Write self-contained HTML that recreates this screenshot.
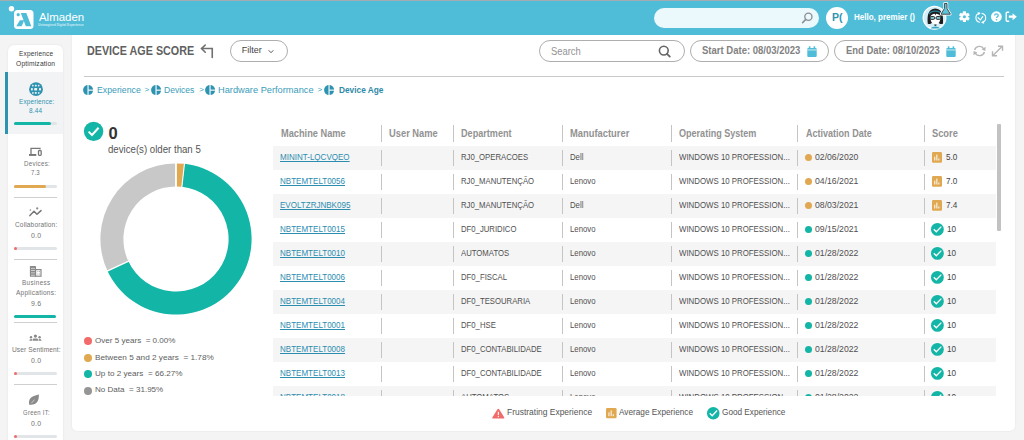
<!DOCTYPE html>
<html><head><meta charset="utf-8">
<style>
*{box-sizing:border-box;margin:0;padding:0}
html,body{width:1024px;height:440px;overflow:hidden;background:#f4f4f4;font-family:"Liberation Sans",sans-serif;position:relative}
.a{position:absolute}
.t{white-space:pre;line-height:1}
svg{overflow:visible}
</style></head><body>
<div class="a" style="left:0px;top:0px;width:1024px;height:35px;background:#50bdd8;"></div>
<div class="a" style="left:0px;top:0px;width:1024px;height:1px;background:#a3adb0;"></div>
<svg class="a" style="left:0px;top:0px" width="100" height="35" viewBox="0 0 100 35">
<circle cx="11.5" cy="8.7" r="2.7" fill="#fff"/>
<rect x="14" y="10" width="19.5" height="19" rx="3.5" fill="#fff"/>
<circle cx="18.2" cy="14.7" r="1.6" fill="#50bdd8"/>
<polygon points="20.8,12.9 26.3,12.9 31.3,26.2 25.8,26.2" fill="#50bdd8"/>
<polygon points="19.9,20.2 24.3,20.2 21.6,26.2 16.3,26.2" fill="#50bdd8"/>
</svg>
<div class="a t" style="left:38.90px;top:11.67px;font-size:11.5px;color:#fff;font-weight:400;letter-spacing:0px;transform:scaleX(0.9936);transform-origin:0 0;">Almaden</div>
<div class="a t" style="left:38.30px;top:23.72px;font-size:3.4px;color:rgba(255,255,255,.7);font-weight:700;letter-spacing:0px;transform:scaleX(0.9186);transform-origin:0 0;">Unimagined Digital Experience</div>
<div class="a" style="left:654px;top:8px;width:165px;height:19.5px;background:#ebf8fc;border-radius:10px"></div>
<svg class="a" style="left:798px;top:10px" width="16" height="16" viewBox="0 0 16 16"><circle cx="10.4" cy="6.8" r="3.6" fill="none" stroke="#8a8f92" stroke-width="1.3"/><line x1="7.8" y1="9.4" x2="4.6" y2="12.6" stroke="#8a8f92" stroke-width="1.5" stroke-linecap="round"/></svg>
<div class="a" style="left:826px;top:7px;width:22px;height:22px;border-radius:50%;background:#fff"></div>
<div class="a t" style="left:832.20px;top:12.64px;font-size:10px;color:#2e93b1;font-weight:700;letter-spacing:0px;transform:scaleX(1.0500);transform-origin:0 0;">P(</div>
<div class="a t" style="left:853.70px;top:12.60px;font-size:8.5px;color:#fff;font-weight:700;letter-spacing:0px;transform:scaleX(0.9425);transform-origin:0 0;">Hello, premier ()</div>
<svg class="a" style="left:920px;top:2px" width="32" height="30" viewBox="0 0 32 30">
<circle cx="14.5" cy="15.75" r="11.3" fill="#d3eef6" stroke="#fff" stroke-width="1.3"/>
<path d="M7.8,21.8 C7,14 8,6.8 15.3,6.5 C22.6,6.8 23.6,14 22.9,21.8 C21,22.3 19.5,22 19,21 L11.5,21 C11,22 9.5,22.3 7.8,21.8Z" fill="#1d1d1d"/>
<path d="M9.2,12.2 C10.5,8 20.1,8 21.4,12.2" fill="none" stroke="#2b7f97" stroke-width="1.2"/>
<path d="M10.4,15.2 C10.4,13 12.5,12 15.4,11.6 C18.3,12 20.4,13 20.4,15.2 C20.4,19.8 18.5,22.3 15.4,22.3 C12.3,22.3 10.4,19.8 10.4,15.2Z" fill="#fff"/>
<path d="M14.3,11 L15.4,13.2 L16.5,11Z" fill="#1d1d1d"/>
<rect x="10.1" y="14.6" width="4.6" height="2.7" rx="1" fill="#8fd0e0" stroke="#1d1d1d" stroke-width="1"/>
<rect x="16.1" y="14.6" width="4.6" height="2.7" rx="1" fill="#8fd0e0" stroke="#1d1d1d" stroke-width="1"/>
<path d="M14.2,22.6 L16.6,22.6 L16.2,23.8 L14.6,23.8Z" fill="#1d1d1d"/>
<path d="M10.8,26.6 C11.8,23.8 19,23.8 20,26.6Z" fill="#3aa8c5"/>
</svg>
<svg class="a" style="left:938px;top:2px" width="15" height="15" viewBox="0 0 15 15"><path d="M6.4,1.5 L9,1.5 L9,6.5 L12.4,12.2 L3,12.2 L6.4,6.5 Z" fill="#5cc3dc" stroke="#fff" stroke-width="2.4" stroke-linejoin="round"/><path d="M6.4,1.5 L9,1.5 L9,6.5 L12.4,12.2 L3,12.2 L6.4,6.5 Z" fill="#5cc3dc" stroke="#4a4a4a" stroke-width="1" stroke-linejoin="round"/></svg>
<svg class="a" style="left:958px;top:11px" width="13" height="13" viewBox="0 0 13 13"><g transform="translate(6.4,5.7)"><rect x="-1.6" y="-5.4" width="3.2" height="3" rx="0.6" transform="rotate(0)" fill="#fff"/><rect x="-1.6" y="-5.4" width="3.2" height="3" rx="0.6" transform="rotate(60)" fill="#fff"/><rect x="-1.6" y="-5.4" width="3.2" height="3" rx="0.6" transform="rotate(120)" fill="#fff"/><rect x="-1.6" y="-5.4" width="3.2" height="3" rx="0.6" transform="rotate(180)" fill="#fff"/><rect x="-1.6" y="-5.4" width="3.2" height="3" rx="0.6" transform="rotate(240)" fill="#fff"/><rect x="-1.6" y="-5.4" width="3.2" height="3" rx="0.6" transform="rotate(300)" fill="#fff"/><circle r="3.7" fill="#fff"/><circle r="1.5" fill="#50bdd8"/></g></svg>
<svg class="a" style="left:974px;top:11px" width="14" height="14" viewBox="0 0 14 14"><g fill="none" stroke="#fff" stroke-width="1.1" stroke-linecap="round">
<path d="M5.3,2.2 A4.7,4.7 0 0 0 5.6,11.3"/><path d="M8.3,11.5 A4.7,4.7 0 0 0 8,2.4"/>
<path d="M4,6.6 L6.4,8.9 L8.7,5.6"/></g>
<path d="M3.6,0.9 L6.6,2 L4.4,4.2Z" fill="#fff"/><path d="M10.2,12.8 L7.2,11.7 L9.4,9.5Z" fill="#fff"/></svg>
<svg class="a" style="left:990px;top:11px" width="13" height="13" viewBox="0 0 13 13"><circle cx="6.4" cy="5.7" r="5.4" fill="#fff"/><path d="M4.6,4.5 C4.6,2.4 8.2,2.4 8.2,4.4 C8.2,5.6 6.5,5.8 6.5,7" fill="none" stroke="#50bdd8" stroke-width="1.3"/><circle cx="6.5" cy="8.7" r="0.8" fill="#50bdd8"/></svg>
<svg class="a" style="left:1005px;top:11px" width="14" height="12" viewBox="0 0 14 12"><path d="M4.2,1.2 L2.2,1.2 Q1.2,1.2 1.2,2.2 L1.2,9.2 Q1.2,10.2 2.2,10.2 L4.2,10.2" fill="none" stroke="#fff" stroke-width="1.4"/><path d="M3.8,4.6 L7.6,4.6 L7.6,2.2 L11.8,5.7 L7.6,9.2 L7.6,6.8 L3.8,6.8Z" fill="#fff"/></svg>
<div class="a" style="left:8px;top:45px;width:55px;height:400px;background:#fff;border-radius:6px 6px 0 0;box-shadow:0 0 2px rgba(0,0,40,.09)"></div>
<div class="a" style="left:8px;top:72px;width:55px;height:62px;background:#f2f3f4;"></div>
<div class="a" style="left:5px;top:72px;width:2.6px;height:62px;background:#2e93b1;"></div>
<div class="a t" style="left:18.60px;top:49.60px;font-size:7.8px;color:#3a3a3a;font-weight:400;letter-spacing:0.2px;transform:scaleX(0.8355);transform-origin:0 0;">Experience</div>
<div class="a t" style="left:15.90px;top:60.00px;font-size:7.8px;color:#3a3a3a;font-weight:400;letter-spacing:0.2px;transform:scaleX(0.8587);transform-origin:0 0;">Optimization</div>
<svg class="a" style="left:28px;top:81px" width="16" height="16" viewBox="0 0 16 16"><circle cx="8" cy="8.2" r="6.9" fill="#2e93b1"/><g fill="#f2f3f4"><rect x="4.1" y="3.7" width="1.5" height="1.8" rx=".4"/><rect x="6.9" y="3.7" width="1.8" height="1.8" rx=".4"/><rect x="10" y="3.7" width="1.4" height="1.8" rx=".4"/><rect x="3" y="7.1" width="1.8" height="2.3" rx=".4"/><rect x="6.2" y="7.1" width="2.9" height="2.3" rx=".4"/><rect x="11" y="7.1" width="2" height="2.3" rx=".4"/><rect x="4.1" y="11" width="1.5" height="1.8" rx=".4"/><rect x="6.9" y="11" width="1.8" height="1.8" rx=".4"/><rect x="10" y="11" width="1.4" height="1.8" rx=".4"/></g></svg>
<div class="a t" style="left:18.80px;top:97.63px;font-size:8px;color:#2e93b1;font-weight:400;letter-spacing:0.2px;transform:scaleX(0.7954);transform-origin:0 0;">Experience:</div>
<div class="a t" style="left:29.00px;top:106.83px;font-size:8px;color:#2e93b1;font-weight:400;letter-spacing:0.2px;transform:scaleX(0.8037);transform-origin:0 0;">8.44</div>
<div class="a" style="left:13.5px;top:122px;width:43.5px;height:3px;background:#e2e5e8;border-radius:2px"></div>
<div class="a" style="left:13.5px;top:122px;width:37px;height:3px;background:#12b5a6;border-radius:2px"></div>
<svg class="a" style="left:28px;top:146px" width="16" height="12" viewBox="0 0 16 12"><g fill="none" stroke="#777" stroke-width="1.3"><path d="M3,8.2 L3,2.3 L12,2.3 L12,3.6"/><rect x="10.5" y="4.6" width="2.7" height="4.7" rx="0.7"/></g><rect x="1" y="8" width="7.3" height="1.9" fill="#777"/></svg>
<div class="a t" style="left:23.50px;top:159.53px;font-size:8px;color:#747474;font-weight:400;letter-spacing:0.4px;transform:scaleX(0.7704);transform-origin:0 0;">Devices:</div>
<div class="a t" style="left:31.30px;top:169.23px;font-size:8px;color:#747474;font-weight:400;letter-spacing:0.2px;transform:scaleX(0.7543);transform-origin:0 0;">7.3</div>
<div class="a" style="left:13.5px;top:184.5px;width:43.5px;height:3px;background:#e2e5e8;border-radius:2px"></div>
<div class="a" style="left:13.5px;top:184.5px;width:32.3px;height:3px;background:#dfa851;border-radius:2px"></div>
<div class="a" style="left:13.5px;top:196.5px;width:43.5px;height:1px;background:#cfcfcf;"></div>
<svg class="a" style="left:28px;top:206px" width="16" height="12" viewBox="0 0 16 12"><g fill="none" stroke="#777" stroke-width="1.5" stroke-linecap="round" stroke-linejoin="round"><path d="M1.9,9.6 L6,5.3 L9,8.3 L13,4.6"/></g><circle cx="2.4" cy="4" r="0.8" fill="#888"/><circle cx="9.2" cy="2.4" r="1.1" fill="#888"/></svg>
<div class="a t" style="left:14.80px;top:221.33px;font-size:8px;color:#747474;font-weight:400;letter-spacing:0.2px;transform:scaleX(0.8120);transform-origin:0 0;">Collaboration:</div>
<div class="a t" style="left:31.00px;top:231.93px;font-size:8px;color:#747474;font-weight:400;letter-spacing:0.2px;transform:scaleX(0.8670);transform-origin:0 0;">0.0</div>
<div class="a" style="left:13.5px;top:247px;width:43.5px;height:3px;background:#e2e5e8;border-radius:2px"></div>
<div class="a" style="left:13.5px;top:247px;width:3px;height:3px;background:#f26b6b;border-radius:2px"></div>
<div class="a" style="left:13.5px;top:259px;width:43.5px;height:1px;background:#cfcfcf;"></div>
<svg class="a" style="left:28px;top:264px" width="16" height="14" viewBox="0 0 16 14"><rect x="1.9" y="2.1" width="6.1" height="10.7" rx=".4" fill="#8a8a8a"/><g fill="#fff" opacity=".75"><rect x="3" y="3.9" width="3.9" height=".8"/><rect x="3" y="6.2" width="3.9" height=".8"/><rect x="3" y="8.5" width="3.9" height=".8"/><rect x="3" y="10.8" width="3.9" height=".8"/></g><rect x="7.6" y="5.6" width="5.4" height="6.6" fill="#fff" stroke="#8a8a8a" stroke-width="1.2"/><g fill="#8a8a8a"><rect x="9.5" y="7.2" width=".8" height=".9"/><rect x="11.2" y="7.2" width=".8" height=".9"/><rect x="9.5" y="9.6" width=".8" height=".9"/><rect x="11.2" y="9.6" width=".8" height=".9"/></g></svg>
<div class="a t" style="left:21.80px;top:279.23px;font-size:8px;color:#747474;font-weight:400;letter-spacing:0.5px;transform:scaleX(0.7840);transform-origin:0 0;">Business</div>
<div class="a t" style="left:16.40px;top:289.23px;font-size:8px;color:#747474;font-weight:400;letter-spacing:0.3px;transform:scaleX(0.8169);transform-origin:0 0;">Applications:</div>
<div class="a t" style="left:31.00px;top:299.93px;font-size:8px;color:#747474;font-weight:400;letter-spacing:0.2px;transform:scaleX(0.8670);transform-origin:0 0;">9.6</div>
<div class="a" style="left:13.5px;top:314.5px;width:42.5px;height:3px;background:#12b5a6;border-radius:2px"></div>
<div class="a" style="left:13.5px;top:322px;width:43.5px;height:1px;background:#cfcfcf;"></div>
<svg class="a" style="left:28px;top:332px" width="16" height="10" viewBox="0 0 16 10"><g fill="#8a8a8a"><circle cx="7.4" cy="4.1" r="1.6"/><path d="M4.9,8.8 L4.9,7.6 Q4.9,6.5 6,6.5 L8.9,6.5 Q10,6.5 10,7.6 L10,8.8Z"/><circle cx="3" cy="5.3" r="1.2"/><path d="M1.3,8.8 Q1.3,7 3,7 Q4.2,7 4.4,7.6 L4.4,8.8Z"/><circle cx="11.6" cy="5.3" r="1.2"/><path d="M13.6,8.8 Q13.6,7 11.9,7 Q10.7,7 10.5,7.6 L10.5,8.8Z"/></g></svg>
<div class="a t" style="left:11.90px;top:346.23px;font-size:8px;color:#747474;font-weight:400;letter-spacing:0.1px;transform:scaleX(0.8254);transform-origin:0 0;">User Sentiment:</div>
<div class="a t" style="left:31.00px;top:356.93px;font-size:8px;color:#747474;font-weight:400;letter-spacing:0.2px;transform:scaleX(0.8670);transform-origin:0 0;">0.0</div>
<div class="a" style="left:13.5px;top:371.8px;width:43.5px;height:3px;background:#e2e5e8;border-radius:2px"></div>
<div class="a" style="left:13.5px;top:371.8px;width:3px;height:3px;background:#f26b6b;border-radius:2px"></div>
<div class="a" style="left:13.5px;top:384px;width:43.5px;height:1px;background:#cfcfcf;"></div>
<svg class="a" style="left:27px;top:392px" width="14" height="14" viewBox="0 0 14 14"><path d="M2.4,12.9 C1.4,9 2.5,5.5 6.8,4 C9.3,3.2 10.9,3 11.8,2.3 C12.1,7 11,11 7,12.3 C5,12.9 3.6,12.6 2.4,12.9Z" fill="#8a8a8a"/><path d="M4.3,11.2 L7.6,7.6" stroke="#fff" stroke-width="0.7" opacity=".8"/></svg>
<div class="a t" style="left:22.50px;top:408.93px;font-size:8px;color:#747474;font-weight:400;letter-spacing:0.4px;transform:scaleX(0.7365);transform-origin:0 0;">Green IT:</div>
<div class="a t" style="left:31.00px;top:419.63px;font-size:8px;color:#747474;font-weight:400;letter-spacing:0.2px;transform:scaleX(0.8670);transform-origin:0 0;">0.0</div>
<div class="a" style="left:13.5px;top:434.5px;width:43.5px;height:3px;background:#e2e5e8;border-radius:2px"></div>
<div class="a" style="left:13.5px;top:434.5px;width:3px;height:3px;background:#f26b6b;border-radius:2px"></div>
<div class="a" style="left:72px;top:35px;width:943px;height:396px;background:#fff;border-radius:0 0 5px 5px;box-shadow:0 0 2px rgba(0,0,40,.09)"></div>
<div class="a" style="left:0px;top:31px;width:1024px;height:4px;background:#50bdd8;"></div>
<div class="a t" style="left:86.90px;top:45.42px;font-size:12.5px;color:#606060;font-weight:700;letter-spacing:0px;transform:scaleX(0.8598);transform-origin:0 0;">DEVICE AGE SCORE</div>
<svg class="a" style="left:199px;top:43px" width="16" height="16" viewBox="0 0 16 16"><g fill="none" stroke="#707070" stroke-width="1.6" stroke-linecap="round"><path d="M13.25,14.5 L13.25,5.5 L3,5.5"/><path d="M6.25,2 L2.5,5.6 L6.25,9.25"/></g></svg>
<div class="a" style="left:230.2px;top:40.3px;width:58px;height:22.2px;border:1px solid #aeaeae;border-radius:11px"></div>
<div class="a t" style="left:241.70px;top:45.88px;font-size:9px;color:#444;font-weight:400;letter-spacing:0px;transform:scaleX(1.0000);transform-origin:0 0;">Filter</div>
<svg class="a" style="left:267px;top:48px" width="8" height="6" viewBox="0 0 8 6"><path d="M1.7,2.3 L4,4.7 L6.3,2.3" fill="none" stroke="#555" stroke-width="1"/></svg>
<div class="a" style="left:539px;top:40.3px;width:146px;height:22.2px;border:1px solid #aeaeae;border-radius:11px"></div>
<div class="a t" style="left:551.00px;top:46.53px;font-size:10px;color:#939393;font-weight:400;letter-spacing:0px;transform:scaleX(0.9404);transform-origin:0 0;">Search</div>
<svg class="a" style="left:656px;top:43px" width="16" height="16" viewBox="0 0 16 16"><circle cx="7.8" cy="7.6" r="4.4" fill="none" stroke="#666" stroke-width="1.6"/><line x1="11" y1="10.8" x2="13.8" y2="13.6" stroke="#666" stroke-width="1.8" stroke-linecap="round"/></svg>
<div class="a" style="left:689.7px;top:40.3px;width:139px;height:22.2px;border:1px solid #aeaeae;border-radius:11px"></div>
<div class="a t" style="left:702.20px;top:45.94px;font-size:10px;color:#828282;font-weight:700;letter-spacing:0px;transform:scaleX(0.9516);transform-origin:0 0;">Start Date: 08/03/2023</div>
<div class="a" style="left:834px;top:40.3px;width:133px;height:22.2px;border:1px solid #aeaeae;border-radius:11px"></div>
<div class="a t" style="left:845.60px;top:45.94px;font-size:10px;color:#828282;font-weight:700;letter-spacing:0px;transform:scaleX(0.9427);transform-origin:0 0;">End Date: 08/10/2023</div>
<svg class="a" style="left:807px;top:45.7px" width="10" height="11" viewBox="0 0 10 11"><rect x="0.3" y="2" width="9.4" height="9" rx="1" fill="#50bdd8"/><rect x="1.8" y="0.3" width="1.6" height="2.5" fill="#50bdd8"/><rect x="6.6" y="0.3" width="1.6" height="2.5" fill="#50bdd8"/><rect x="0.3" y="3.6" width="9.4" height="0.7" fill="#fff"/></svg>
<svg class="a" style="left:945.6px;top:45.7px" width="10" height="11" viewBox="0 0 10 11"><rect x="0.3" y="2" width="9.4" height="9" rx="1" fill="#50bdd8"/><rect x="1.8" y="0.3" width="1.6" height="2.5" fill="#50bdd8"/><rect x="6.6" y="0.3" width="1.6" height="2.5" fill="#50bdd8"/><rect x="0.3" y="3.6" width="9.4" height="0.7" fill="#fff"/></svg>
<svg class="a" style="left:972px;top:44px" width="15" height="14" viewBox="0 0 15 14"><g fill="none" stroke="#b5b5b5" stroke-width="1.4"><path d="M2.6,6 A5,5 0 0 1 11.8,5"/><path d="M12.4,8 A5,5 0 0 1 3.2,9"/></g><path d="M13.6,2.8 L13.4,7 L9.6,5.6Z" fill="#b5b5b5"/><path d="M1.4,11.2 L1.6,7 L5.4,8.4Z" fill="#b5b5b5"/></svg>
<svg class="a" style="left:990px;top:44px" width="15" height="14" viewBox="0 0 15 14"><g stroke="#b5b5b5" stroke-width="1.4" fill="none"><line x1="3" y1="11.5" x2="12" y2="2.5"/><path d="M8,2.2 L12.5,2.2 L12.5,6.7"/><path d="M2.5,7.3 L2.5,11.8 L7,11.8"/></g></svg>
<div class="a" style="left:84px;top:76px;width:920px;height:1px;background:#c9c9c9;"></div>
<svg class="a" style="left:83.4px;top:85px" width="10.5" height="10.5" viewBox="0 0 10.5 10.5"><circle cx="5.1" cy="5.1" r="5" fill="#2e93b1"/><rect x="4.5" y="0" width="1.1" height="10.5" fill="#fff"/><rect x="5.1" y="4.6" width="5.5" height="1.1" fill="#fff"/></svg>
<div class="a t" style="left:97.20px;top:84.99px;font-size:9.7px;color:#3a9dba;font-weight:400;letter-spacing:0px;transform:scaleX(0.9037);transform-origin:0 0;">Experience</div>
<div class="a t" style="left:144.60px;top:86.43px;font-size:8px;color:#3a9dba;font-weight:400;letter-spacing:0px;">&gt;</div>
<svg class="a" style="left:151px;top:85px" width="10.5" height="10.5" viewBox="0 0 10.5 10.5"><circle cx="5.1" cy="5.1" r="5" fill="#2e93b1"/><rect x="4.5" y="0" width="1.1" height="10.5" fill="#fff"/><rect x="5.1" y="4.6" width="5.5" height="1.1" fill="#fff"/></svg>
<div class="a t" style="left:164.40px;top:84.99px;font-size:9.7px;color:#3a9dba;font-weight:400;letter-spacing:0px;transform:scaleX(0.8820);transform-origin:0 0;">Devices</div>
<div class="a t" style="left:199.30px;top:86.43px;font-size:8px;color:#3a9dba;font-weight:400;letter-spacing:0px;">&gt;</div>
<svg class="a" style="left:205px;top:85px" width="10.5" height="10.5" viewBox="0 0 10.5 10.5"><circle cx="5.1" cy="5.1" r="5" fill="#2e93b1"/><rect x="4.5" y="0" width="1.1" height="10.5" fill="#fff"/><rect x="5.1" y="4.6" width="5.5" height="1.1" fill="#fff"/></svg>
<div class="a t" style="left:218.40px;top:84.99px;font-size:9.7px;color:#3a9dba;font-weight:400;letter-spacing:0px;transform:scaleX(0.9545);transform-origin:0 0;">Hardware Performance</div>
<div class="a t" style="left:317.40px;top:86.43px;font-size:8px;color:#3a9dba;font-weight:400;letter-spacing:0px;">&gt;</div>
<svg class="a" style="left:324px;top:85px" width="10.5" height="10.5" viewBox="0 0 10.5 10.5"><circle cx="5.1" cy="5.1" r="5" fill="#2e93b1"/><rect x="4.5" y="0" width="1.1" height="10.5" fill="#fff"/><rect x="5.1" y="4.6" width="5.5" height="1.1" fill="#fff"/></svg>
<div class="a t" style="left:338.60px;top:84.99px;font-size:9.7px;color:#2f8aa8;font-weight:700;letter-spacing:0px;transform:scaleX(0.8578);transform-origin:0 0;">Device Age</div>
<svg class="a" style="left:83px;top:121px" width="22" height="22" viewBox="0 0 22 22"><circle cx="10.6" cy="10.4" r="9.7" fill="#12b5a6"/><path d="M5.6,10.6 L9,14 L15.6,6.8" fill="none" stroke="#fff" stroke-width="2"/></svg>
<div class="a t" style="left:108.60px;top:124.53px;font-size:16.5px;color:#333;font-weight:700;letter-spacing:0px;">0</div>
<div class="a t" style="left:108.40px;top:144.94px;font-size:10px;color:#555;font-weight:400;letter-spacing:0px;transform:scaleX(0.9649);transform-origin:0 0;">device(s) older than 5</div>
<svg class="a" style="left:25.8px;top:89.1px" width="300" height="300" viewBox="0 0 300 300"><path d="M150.00,74.40 A75.6,75.6 0 0 1 158.44,74.87 L155.87,97.73 A52.6,52.6 0 0 0 150.00,97.40 Z" fill="#dfa851"/><path d="M158.44,74.87 A75.6,75.6 0 1 1 81.49,181.97 L102.34,172.25 A52.6,52.6 0 1 0 155.87,97.73 Z" fill="#12b5a6"/><path d="M81.49,181.97 A75.6,75.6 0 0 1 150.00,74.40 L150.00,97.40 A52.6,52.6 0 0 0 102.34,172.25 Z" fill="#c8c8c8"/><line x1="150.00" y1="98.40" x2="150.00" y2="73.40" stroke="#fff" stroke-width="1.8"/><line x1="155.76" y1="98.72" x2="158.55" y2="73.88" stroke="#fff" stroke-width="1.1"/><line x1="103.24" y1="171.82" x2="80.59" y2="182.40" stroke="#fff" stroke-width="1.3"/></svg>
<div class="a" style="left:83.5px;top:337.3px;width:8px;height:8px;border-radius:50%;background:#f26b6b"></div>
<div class="a t" style="left:95.00px;top:337.23px;font-size:8px;color:#606060;font-weight:400;letter-spacing:0px;transform:scaleX(1.0084);transform-origin:0 0;">Over 5 years  = 0.00%</div>
<div class="a" style="left:83.5px;top:353.6px;width:8px;height:8px;border-radius:50%;background:#dfa851"></div>
<div class="a t" style="left:95.00px;top:353.53px;font-size:8px;color:#606060;font-weight:400;letter-spacing:0px;transform:scaleX(1.0249);transform-origin:0 0;">Between 5 and 2 years  = 1.78%</div>
<div class="a" style="left:83.5px;top:370px;width:8px;height:8px;border-radius:50%;background:#12b5a6"></div>
<div class="a t" style="left:95.00px;top:369.93px;font-size:8px;color:#606060;font-weight:400;letter-spacing:0px;transform:scaleX(1.0167);transform-origin:0 0;">Up to 2 years  = 66.27%</div>
<div class="a" style="left:83.5px;top:386.5px;width:8px;height:8px;border-radius:50%;background:#959595"></div>
<div class="a t" style="left:95.00px;top:386.43px;font-size:8px;color:#606060;font-weight:400;letter-spacing:0px;transform:scaleX(1.0062);transform-origin:0 0;">No Data  = 31.95%</div>
<div class="a t" style="left:280.70px;top:128.53px;font-size:10px;color:#929292;font-weight:700;letter-spacing:0px;transform:scaleX(0.9239);transform-origin:0 0;">Machine Name</div>
<div class="a t" style="left:388.90px;top:128.53px;font-size:10px;color:#929292;font-weight:700;letter-spacing:0px;transform:scaleX(0.9337);transform-origin:0 0;">User Name</div>
<div class="a t" style="left:461.30px;top:128.53px;font-size:10px;color:#929292;font-weight:700;letter-spacing:0px;transform:scaleX(0.9104);transform-origin:0 0;">Department</div>
<div class="a t" style="left:569.80px;top:128.53px;font-size:10px;color:#929292;font-weight:700;letter-spacing:0px;transform:scaleX(0.9359);transform-origin:0 0;">Manufacturer</div>
<div class="a t" style="left:679.00px;top:128.53px;font-size:10px;color:#929292;font-weight:700;letter-spacing:0px;transform:scaleX(0.9043);transform-origin:0 0;">Operating System</div>
<div class="a t" style="left:805.50px;top:128.53px;font-size:10px;color:#929292;font-weight:700;letter-spacing:0px;transform:scaleX(0.9025);transform-origin:0 0;">Activation Date</div>
<div class="a t" style="left:931.80px;top:128.53px;font-size:10px;color:#929292;font-weight:700;letter-spacing:0px;transform:scaleX(0.9282);transform-origin:0 0;">Score</div>
<div class="a" style="left:380.8px;top:125px;width:1.2px;height:17px;background:#c4c4c4;"></div>
<div class="a" style="left:453.0px;top:125px;width:1.2px;height:17px;background:#c4c4c4;"></div>
<div class="a" style="left:561.5px;top:125px;width:1.2px;height:17px;background:#c4c4c4;"></div>
<div class="a" style="left:670.5px;top:125px;width:1.2px;height:17px;background:#c4c4c4;"></div>
<div class="a" style="left:797.0px;top:125px;width:1.2px;height:17px;background:#c4c4c4;"></div>
<div class="a" style="left:924.1px;top:125px;width:1.2px;height:17px;background:#c4c4c4;"></div>
<div class="a" style="left:0;top:145.7px;width:1024px;height:250.8px;overflow:hidden">
<div class="a" style="left:273.2px;top:0px;width:723.2px;height:24px;background:#f5f5f5;"></div>
<div class="a t" style="left:280.30px;top:7.50px;font-size:8.5px;color:#2c8db0;font-weight:400;letter-spacing:0px;transform:scaleX(0.945);transform-origin:0 0;text-decoration:underline;text-underline-offset:1px">MININT-LQCVQEO</div>
<div class="a t" style="left:461.30px;top:7.50px;font-size:8.5px;color:#505050;font-weight:400;letter-spacing:0px;transform:scaleX(0.91);transform-origin:0 0;">RJ0_OPERACOES</div>
<div class="a t" style="left:569.80px;top:7.50px;font-size:8.5px;color:#505050;font-weight:400;letter-spacing:0px;transform:scaleX(0.915);transform-origin:0 0;">Dell</div>
<div class="a t" style="left:678.60px;top:7.50px;font-size:8.5px;color:#505050;font-weight:400;letter-spacing:0px;transform:scaleX(0.924);transform-origin:0 0;">WINDOWS 10 PROFESSION...</div>
<div class="a" style="left:805px;top:8.6px;width:7px;height:7px;border-radius:50%;background:#dfa851"></div>
<div class="a t" style="left:814.60px;top:7.50px;font-size:8.5px;color:#505050;font-weight:400;letter-spacing:0px;transform:scaleX(1.02);transform-origin:0 0;">02/06/2020</div>
<div class="a" style="left:380.8px;top:4px;width:1.2px;height:16px;background:#c4c4c4;"></div>
<div class="a" style="left:453.0px;top:4px;width:1.2px;height:16px;background:#c4c4c4;"></div>
<div class="a" style="left:561.5px;top:4px;width:1.2px;height:16px;background:#c4c4c4;"></div>
<div class="a" style="left:670.5px;top:4px;width:1.2px;height:16px;background:#c4c4c4;"></div>
<div class="a" style="left:797.0px;top:4px;width:1.2px;height:16px;background:#c4c4c4;"></div>
<div class="a" style="left:924.1px;top:4px;width:1.2px;height:16px;background:#c4c4c4;"></div>
<svg class="a" style="left:931.7px;top:6.5px" width="10" height="10.8" viewBox="0 0 10 10.8"><rect width="10" height="10.8" rx="1.3" fill="#dfa851"/><rect x="2.2" y="4.7" width="1.1" height="3.8" fill="#fff" opacity=".9"/><rect x="4.3" y="2.6" width="1.1" height="5.9" fill="#fff" opacity=".9"/><rect x="6.3" y="6.5" width="1.1" height="2" fill="#fff" opacity=".9"/></svg>
<div class="a t" style="left:945.70px;top:7.50px;font-size:8.5px;color:#444;font-weight:400;letter-spacing:0px;transform:scaleX(0.96);transform-origin:0 0;">5.0</div>
<div class="a t" style="left:280.30px;top:31.50px;font-size:8.5px;color:#2c8db0;font-weight:400;letter-spacing:0px;transform:scaleX(0.945);transform-origin:0 0;text-decoration:underline;text-underline-offset:1px">NBTEMTELT0056</div>
<div class="a t" style="left:461.30px;top:31.50px;font-size:8.5px;color:#505050;font-weight:400;letter-spacing:0px;transform:scaleX(0.91);transform-origin:0 0;">RJ0_MANUTENÇÃO</div>
<div class="a t" style="left:569.80px;top:31.50px;font-size:8.5px;color:#505050;font-weight:400;letter-spacing:0px;transform:scaleX(0.915);transform-origin:0 0;">Lenovo</div>
<div class="a t" style="left:678.60px;top:31.50px;font-size:8.5px;color:#505050;font-weight:400;letter-spacing:0px;transform:scaleX(0.924);transform-origin:0 0;">WINDOWS 10 PROFESSION...</div>
<div class="a" style="left:805px;top:32.6px;width:7px;height:7px;border-radius:50%;background:#dfa851"></div>
<div class="a t" style="left:814.60px;top:31.50px;font-size:8.5px;color:#505050;font-weight:400;letter-spacing:0px;transform:scaleX(1.02);transform-origin:0 0;">04/16/2021</div>
<div class="a" style="left:380.8px;top:28px;width:1.2px;height:16px;background:#c4c4c4;"></div>
<div class="a" style="left:453.0px;top:28px;width:1.2px;height:16px;background:#c4c4c4;"></div>
<div class="a" style="left:561.5px;top:28px;width:1.2px;height:16px;background:#c4c4c4;"></div>
<div class="a" style="left:670.5px;top:28px;width:1.2px;height:16px;background:#c4c4c4;"></div>
<div class="a" style="left:797.0px;top:28px;width:1.2px;height:16px;background:#c4c4c4;"></div>
<div class="a" style="left:924.1px;top:28px;width:1.2px;height:16px;background:#c4c4c4;"></div>
<svg class="a" style="left:931.7px;top:30.5px" width="10" height="10.8" viewBox="0 0 10 10.8"><rect width="10" height="10.8" rx="1.3" fill="#dfa851"/><rect x="2.2" y="4.7" width="1.1" height="3.8" fill="#fff" opacity=".9"/><rect x="4.3" y="2.6" width="1.1" height="5.9" fill="#fff" opacity=".9"/><rect x="6.3" y="6.5" width="1.1" height="2" fill="#fff" opacity=".9"/></svg>
<div class="a t" style="left:945.70px;top:31.50px;font-size:8.5px;color:#444;font-weight:400;letter-spacing:0px;transform:scaleX(0.96);transform-origin:0 0;">7.0</div>
<div class="a" style="left:273.2px;top:48px;width:723.2px;height:24px;background:#f5f5f5;"></div>
<div class="a t" style="left:280.30px;top:55.50px;font-size:8.5px;color:#2c8db0;font-weight:400;letter-spacing:0px;transform:scaleX(0.945);transform-origin:0 0;text-decoration:underline;text-underline-offset:1px">EVOLTZRJNBK095</div>
<div class="a t" style="left:461.30px;top:55.50px;font-size:8.5px;color:#505050;font-weight:400;letter-spacing:0px;transform:scaleX(0.91);transform-origin:0 0;">RJ0_MANUTENÇÃO</div>
<div class="a t" style="left:569.80px;top:55.50px;font-size:8.5px;color:#505050;font-weight:400;letter-spacing:0px;transform:scaleX(0.915);transform-origin:0 0;">Dell</div>
<div class="a t" style="left:678.60px;top:55.50px;font-size:8.5px;color:#505050;font-weight:400;letter-spacing:0px;transform:scaleX(0.924);transform-origin:0 0;">WINDOWS 10 PROFESSION...</div>
<div class="a" style="left:805px;top:56.6px;width:7px;height:7px;border-radius:50%;background:#dfa851"></div>
<div class="a t" style="left:814.60px;top:55.50px;font-size:8.5px;color:#505050;font-weight:400;letter-spacing:0px;transform:scaleX(1.02);transform-origin:0 0;">08/03/2021</div>
<div class="a" style="left:380.8px;top:52px;width:1.2px;height:16px;background:#c4c4c4;"></div>
<div class="a" style="left:453.0px;top:52px;width:1.2px;height:16px;background:#c4c4c4;"></div>
<div class="a" style="left:561.5px;top:52px;width:1.2px;height:16px;background:#c4c4c4;"></div>
<div class="a" style="left:670.5px;top:52px;width:1.2px;height:16px;background:#c4c4c4;"></div>
<div class="a" style="left:797.0px;top:52px;width:1.2px;height:16px;background:#c4c4c4;"></div>
<div class="a" style="left:924.1px;top:52px;width:1.2px;height:16px;background:#c4c4c4;"></div>
<svg class="a" style="left:931.7px;top:54.5px" width="10" height="10.8" viewBox="0 0 10 10.8"><rect width="10" height="10.8" rx="1.3" fill="#dfa851"/><rect x="2.2" y="4.7" width="1.1" height="3.8" fill="#fff" opacity=".9"/><rect x="4.3" y="2.6" width="1.1" height="5.9" fill="#fff" opacity=".9"/><rect x="6.3" y="6.5" width="1.1" height="2" fill="#fff" opacity=".9"/></svg>
<div class="a t" style="left:945.70px;top:55.50px;font-size:8.5px;color:#444;font-weight:400;letter-spacing:0px;transform:scaleX(0.96);transform-origin:0 0;">7.4</div>
<div class="a t" style="left:280.30px;top:79.50px;font-size:8.5px;color:#2c8db0;font-weight:400;letter-spacing:0px;transform:scaleX(0.945);transform-origin:0 0;text-decoration:underline;text-underline-offset:1px">NBTEMTELT0015</div>
<div class="a t" style="left:461.30px;top:79.50px;font-size:8.5px;color:#505050;font-weight:400;letter-spacing:0px;transform:scaleX(0.91);transform-origin:0 0;">DF0_JURIDICO</div>
<div class="a t" style="left:569.80px;top:79.50px;font-size:8.5px;color:#505050;font-weight:400;letter-spacing:0px;transform:scaleX(0.915);transform-origin:0 0;">Lenovo</div>
<div class="a t" style="left:678.60px;top:79.50px;font-size:8.5px;color:#505050;font-weight:400;letter-spacing:0px;transform:scaleX(0.924);transform-origin:0 0;">WINDOWS 10 PROFESSION...</div>
<div class="a" style="left:805px;top:80.6px;width:7px;height:7px;border-radius:50%;background:#12b5a6"></div>
<div class="a t" style="left:814.60px;top:79.50px;font-size:8.5px;color:#505050;font-weight:400;letter-spacing:0px;transform:scaleX(1.02);transform-origin:0 0;">09/15/2021</div>
<div class="a" style="left:380.8px;top:76px;width:1.2px;height:16px;background:#c4c4c4;"></div>
<div class="a" style="left:453.0px;top:76px;width:1.2px;height:16px;background:#c4c4c4;"></div>
<div class="a" style="left:561.5px;top:76px;width:1.2px;height:16px;background:#c4c4c4;"></div>
<div class="a" style="left:670.5px;top:76px;width:1.2px;height:16px;background:#c4c4c4;"></div>
<div class="a" style="left:797.0px;top:76px;width:1.2px;height:16px;background:#c4c4c4;"></div>
<div class="a" style="left:924.1px;top:76px;width:1.2px;height:16px;background:#c4c4c4;"></div>
<svg class="a" style="left:931.2px;top:77.3px" width="12.8" height="12.8" viewBox="0 0 12.8 12.8"><circle cx="6.4" cy="6.4" r="6.4" fill="#12b5a6"/><path d="M2.8,6.3 L5.3,8.8 L10.3,3.6" fill="none" stroke="#fff" stroke-width="1.3"/></svg>
<div class="a t" style="left:947.30px;top:79.50px;font-size:8.5px;color:#444;font-weight:400;letter-spacing:0px;transform:scaleX(0.96);transform-origin:0 0;">10</div>
<div class="a" style="left:273.2px;top:96px;width:723.2px;height:24px;background:#f5f5f5;"></div>
<div class="a t" style="left:280.30px;top:103.50px;font-size:8.5px;color:#2c8db0;font-weight:400;letter-spacing:0px;transform:scaleX(0.945);transform-origin:0 0;text-decoration:underline;text-underline-offset:1px">NBTEMTELT0010</div>
<div class="a t" style="left:461.30px;top:103.50px;font-size:8.5px;color:#505050;font-weight:400;letter-spacing:0px;transform:scaleX(0.91);transform-origin:0 0;">AUTOMATOS</div>
<div class="a t" style="left:569.80px;top:103.50px;font-size:8.5px;color:#505050;font-weight:400;letter-spacing:0px;transform:scaleX(0.915);transform-origin:0 0;">Lenovo</div>
<div class="a t" style="left:678.60px;top:103.50px;font-size:8.5px;color:#505050;font-weight:400;letter-spacing:0px;transform:scaleX(0.924);transform-origin:0 0;">WINDOWS 10 PROFESSION...</div>
<div class="a" style="left:805px;top:104.6px;width:7px;height:7px;border-radius:50%;background:#12b5a6"></div>
<div class="a t" style="left:814.60px;top:103.50px;font-size:8.5px;color:#505050;font-weight:400;letter-spacing:0px;transform:scaleX(1.02);transform-origin:0 0;">01/28/2022</div>
<div class="a" style="left:380.8px;top:100px;width:1.2px;height:16px;background:#c4c4c4;"></div>
<div class="a" style="left:453.0px;top:100px;width:1.2px;height:16px;background:#c4c4c4;"></div>
<div class="a" style="left:561.5px;top:100px;width:1.2px;height:16px;background:#c4c4c4;"></div>
<div class="a" style="left:670.5px;top:100px;width:1.2px;height:16px;background:#c4c4c4;"></div>
<div class="a" style="left:797.0px;top:100px;width:1.2px;height:16px;background:#c4c4c4;"></div>
<div class="a" style="left:924.1px;top:100px;width:1.2px;height:16px;background:#c4c4c4;"></div>
<svg class="a" style="left:931.2px;top:101.3px" width="12.8" height="12.8" viewBox="0 0 12.8 12.8"><circle cx="6.4" cy="6.4" r="6.4" fill="#12b5a6"/><path d="M2.8,6.3 L5.3,8.8 L10.3,3.6" fill="none" stroke="#fff" stroke-width="1.3"/></svg>
<div class="a t" style="left:947.30px;top:103.50px;font-size:8.5px;color:#444;font-weight:400;letter-spacing:0px;transform:scaleX(0.96);transform-origin:0 0;">10</div>
<div class="a t" style="left:280.30px;top:127.50px;font-size:8.5px;color:#2c8db0;font-weight:400;letter-spacing:0px;transform:scaleX(0.945);transform-origin:0 0;text-decoration:underline;text-underline-offset:1px">NBTEMTELT0006</div>
<div class="a t" style="left:461.30px;top:127.50px;font-size:8.5px;color:#505050;font-weight:400;letter-spacing:0px;transform:scaleX(0.91);transform-origin:0 0;">DF0_FISCAL</div>
<div class="a t" style="left:569.80px;top:127.50px;font-size:8.5px;color:#505050;font-weight:400;letter-spacing:0px;transform:scaleX(0.915);transform-origin:0 0;">Lenovo</div>
<div class="a t" style="left:678.60px;top:127.50px;font-size:8.5px;color:#505050;font-weight:400;letter-spacing:0px;transform:scaleX(0.924);transform-origin:0 0;">WINDOWS 10 PROFESSION...</div>
<div class="a" style="left:805px;top:128.6px;width:7px;height:7px;border-radius:50%;background:#12b5a6"></div>
<div class="a t" style="left:814.60px;top:127.50px;font-size:8.5px;color:#505050;font-weight:400;letter-spacing:0px;transform:scaleX(1.02);transform-origin:0 0;">01/28/2022</div>
<div class="a" style="left:380.8px;top:124px;width:1.2px;height:16px;background:#c4c4c4;"></div>
<div class="a" style="left:453.0px;top:124px;width:1.2px;height:16px;background:#c4c4c4;"></div>
<div class="a" style="left:561.5px;top:124px;width:1.2px;height:16px;background:#c4c4c4;"></div>
<div class="a" style="left:670.5px;top:124px;width:1.2px;height:16px;background:#c4c4c4;"></div>
<div class="a" style="left:797.0px;top:124px;width:1.2px;height:16px;background:#c4c4c4;"></div>
<div class="a" style="left:924.1px;top:124px;width:1.2px;height:16px;background:#c4c4c4;"></div>
<svg class="a" style="left:931.2px;top:125.3px" width="12.8" height="12.8" viewBox="0 0 12.8 12.8"><circle cx="6.4" cy="6.4" r="6.4" fill="#12b5a6"/><path d="M2.8,6.3 L5.3,8.8 L10.3,3.6" fill="none" stroke="#fff" stroke-width="1.3"/></svg>
<div class="a t" style="left:947.30px;top:127.50px;font-size:8.5px;color:#444;font-weight:400;letter-spacing:0px;transform:scaleX(0.96);transform-origin:0 0;">10</div>
<div class="a" style="left:273.2px;top:144px;width:723.2px;height:24px;background:#f5f5f5;"></div>
<div class="a t" style="left:280.30px;top:151.50px;font-size:8.5px;color:#2c8db0;font-weight:400;letter-spacing:0px;transform:scaleX(0.945);transform-origin:0 0;text-decoration:underline;text-underline-offset:1px">NBTEMTELT0004</div>
<div class="a t" style="left:461.30px;top:151.50px;font-size:8.5px;color:#505050;font-weight:400;letter-spacing:0px;transform:scaleX(0.91);transform-origin:0 0;">DF0_TESOURARIA</div>
<div class="a t" style="left:569.80px;top:151.50px;font-size:8.5px;color:#505050;font-weight:400;letter-spacing:0px;transform:scaleX(0.915);transform-origin:0 0;">Lenovo</div>
<div class="a t" style="left:678.60px;top:151.50px;font-size:8.5px;color:#505050;font-weight:400;letter-spacing:0px;transform:scaleX(0.924);transform-origin:0 0;">WINDOWS 10 PROFESSION...</div>
<div class="a" style="left:805px;top:152.6px;width:7px;height:7px;border-radius:50%;background:#12b5a6"></div>
<div class="a t" style="left:814.60px;top:151.50px;font-size:8.5px;color:#505050;font-weight:400;letter-spacing:0px;transform:scaleX(1.02);transform-origin:0 0;">01/28/2022</div>
<div class="a" style="left:380.8px;top:148px;width:1.2px;height:16px;background:#c4c4c4;"></div>
<div class="a" style="left:453.0px;top:148px;width:1.2px;height:16px;background:#c4c4c4;"></div>
<div class="a" style="left:561.5px;top:148px;width:1.2px;height:16px;background:#c4c4c4;"></div>
<div class="a" style="left:670.5px;top:148px;width:1.2px;height:16px;background:#c4c4c4;"></div>
<div class="a" style="left:797.0px;top:148px;width:1.2px;height:16px;background:#c4c4c4;"></div>
<div class="a" style="left:924.1px;top:148px;width:1.2px;height:16px;background:#c4c4c4;"></div>
<svg class="a" style="left:931.2px;top:149.3px" width="12.8" height="12.8" viewBox="0 0 12.8 12.8"><circle cx="6.4" cy="6.4" r="6.4" fill="#12b5a6"/><path d="M2.8,6.3 L5.3,8.8 L10.3,3.6" fill="none" stroke="#fff" stroke-width="1.3"/></svg>
<div class="a t" style="left:947.30px;top:151.50px;font-size:8.5px;color:#444;font-weight:400;letter-spacing:0px;transform:scaleX(0.96);transform-origin:0 0;">10</div>
<div class="a t" style="left:280.30px;top:175.50px;font-size:8.5px;color:#2c8db0;font-weight:400;letter-spacing:0px;transform:scaleX(0.945);transform-origin:0 0;text-decoration:underline;text-underline-offset:1px">NBTEMTELT0001</div>
<div class="a t" style="left:461.30px;top:175.50px;font-size:8.5px;color:#505050;font-weight:400;letter-spacing:0px;transform:scaleX(0.91);transform-origin:0 0;">DF0_HSE</div>
<div class="a t" style="left:569.80px;top:175.50px;font-size:8.5px;color:#505050;font-weight:400;letter-spacing:0px;transform:scaleX(0.915);transform-origin:0 0;">Lenovo</div>
<div class="a t" style="left:678.60px;top:175.50px;font-size:8.5px;color:#505050;font-weight:400;letter-spacing:0px;transform:scaleX(0.924);transform-origin:0 0;">WINDOWS 10 PROFESSION...</div>
<div class="a" style="left:805px;top:176.6px;width:7px;height:7px;border-radius:50%;background:#12b5a6"></div>
<div class="a t" style="left:814.60px;top:175.50px;font-size:8.5px;color:#505050;font-weight:400;letter-spacing:0px;transform:scaleX(1.02);transform-origin:0 0;">01/28/2022</div>
<div class="a" style="left:380.8px;top:172px;width:1.2px;height:16px;background:#c4c4c4;"></div>
<div class="a" style="left:453.0px;top:172px;width:1.2px;height:16px;background:#c4c4c4;"></div>
<div class="a" style="left:561.5px;top:172px;width:1.2px;height:16px;background:#c4c4c4;"></div>
<div class="a" style="left:670.5px;top:172px;width:1.2px;height:16px;background:#c4c4c4;"></div>
<div class="a" style="left:797.0px;top:172px;width:1.2px;height:16px;background:#c4c4c4;"></div>
<div class="a" style="left:924.1px;top:172px;width:1.2px;height:16px;background:#c4c4c4;"></div>
<svg class="a" style="left:931.2px;top:173.3px" width="12.8" height="12.8" viewBox="0 0 12.8 12.8"><circle cx="6.4" cy="6.4" r="6.4" fill="#12b5a6"/><path d="M2.8,6.3 L5.3,8.8 L10.3,3.6" fill="none" stroke="#fff" stroke-width="1.3"/></svg>
<div class="a t" style="left:947.30px;top:175.50px;font-size:8.5px;color:#444;font-weight:400;letter-spacing:0px;transform:scaleX(0.96);transform-origin:0 0;">10</div>
<div class="a" style="left:273.2px;top:192px;width:723.2px;height:24px;background:#f5f5f5;"></div>
<div class="a t" style="left:280.30px;top:199.50px;font-size:8.5px;color:#2c8db0;font-weight:400;letter-spacing:0px;transform:scaleX(0.945);transform-origin:0 0;text-decoration:underline;text-underline-offset:1px">NBTEMTELT0008</div>
<div class="a t" style="left:461.30px;top:199.50px;font-size:8.5px;color:#505050;font-weight:400;letter-spacing:0px;transform:scaleX(0.91);transform-origin:0 0;">DF0_CONTABILIDADE</div>
<div class="a t" style="left:569.80px;top:199.50px;font-size:8.5px;color:#505050;font-weight:400;letter-spacing:0px;transform:scaleX(0.915);transform-origin:0 0;">Lenovo</div>
<div class="a t" style="left:678.60px;top:199.50px;font-size:8.5px;color:#505050;font-weight:400;letter-spacing:0px;transform:scaleX(0.924);transform-origin:0 0;">WINDOWS 10 PROFESSION...</div>
<div class="a" style="left:805px;top:200.6px;width:7px;height:7px;border-radius:50%;background:#12b5a6"></div>
<div class="a t" style="left:814.60px;top:199.50px;font-size:8.5px;color:#505050;font-weight:400;letter-spacing:0px;transform:scaleX(1.02);transform-origin:0 0;">01/28/2022</div>
<div class="a" style="left:380.8px;top:196px;width:1.2px;height:16px;background:#c4c4c4;"></div>
<div class="a" style="left:453.0px;top:196px;width:1.2px;height:16px;background:#c4c4c4;"></div>
<div class="a" style="left:561.5px;top:196px;width:1.2px;height:16px;background:#c4c4c4;"></div>
<div class="a" style="left:670.5px;top:196px;width:1.2px;height:16px;background:#c4c4c4;"></div>
<div class="a" style="left:797.0px;top:196px;width:1.2px;height:16px;background:#c4c4c4;"></div>
<div class="a" style="left:924.1px;top:196px;width:1.2px;height:16px;background:#c4c4c4;"></div>
<svg class="a" style="left:931.2px;top:197.3px" width="12.8" height="12.8" viewBox="0 0 12.8 12.8"><circle cx="6.4" cy="6.4" r="6.4" fill="#12b5a6"/><path d="M2.8,6.3 L5.3,8.8 L10.3,3.6" fill="none" stroke="#fff" stroke-width="1.3"/></svg>
<div class="a t" style="left:947.30px;top:199.50px;font-size:8.5px;color:#444;font-weight:400;letter-spacing:0px;transform:scaleX(0.96);transform-origin:0 0;">10</div>
<div class="a t" style="left:280.30px;top:223.50px;font-size:8.5px;color:#2c8db0;font-weight:400;letter-spacing:0px;transform:scaleX(0.945);transform-origin:0 0;text-decoration:underline;text-underline-offset:1px">NBTEMTELT0013</div>
<div class="a t" style="left:461.30px;top:223.50px;font-size:8.5px;color:#505050;font-weight:400;letter-spacing:0px;transform:scaleX(0.91);transform-origin:0 0;">DF0_CONTABILIDADE</div>
<div class="a t" style="left:569.80px;top:223.50px;font-size:8.5px;color:#505050;font-weight:400;letter-spacing:0px;transform:scaleX(0.915);transform-origin:0 0;">Lenovo</div>
<div class="a t" style="left:678.60px;top:223.50px;font-size:8.5px;color:#505050;font-weight:400;letter-spacing:0px;transform:scaleX(0.924);transform-origin:0 0;">WINDOWS 10 PROFESSION...</div>
<div class="a" style="left:805px;top:224.6px;width:7px;height:7px;border-radius:50%;background:#12b5a6"></div>
<div class="a t" style="left:814.60px;top:223.50px;font-size:8.5px;color:#505050;font-weight:400;letter-spacing:0px;transform:scaleX(1.02);transform-origin:0 0;">01/28/2022</div>
<div class="a" style="left:380.8px;top:220px;width:1.2px;height:16px;background:#c4c4c4;"></div>
<div class="a" style="left:453.0px;top:220px;width:1.2px;height:16px;background:#c4c4c4;"></div>
<div class="a" style="left:561.5px;top:220px;width:1.2px;height:16px;background:#c4c4c4;"></div>
<div class="a" style="left:670.5px;top:220px;width:1.2px;height:16px;background:#c4c4c4;"></div>
<div class="a" style="left:797.0px;top:220px;width:1.2px;height:16px;background:#c4c4c4;"></div>
<div class="a" style="left:924.1px;top:220px;width:1.2px;height:16px;background:#c4c4c4;"></div>
<svg class="a" style="left:931.2px;top:221.3px" width="12.8" height="12.8" viewBox="0 0 12.8 12.8"><circle cx="6.4" cy="6.4" r="6.4" fill="#12b5a6"/><path d="M2.8,6.3 L5.3,8.8 L10.3,3.6" fill="none" stroke="#fff" stroke-width="1.3"/></svg>
<div class="a t" style="left:947.30px;top:223.50px;font-size:8.5px;color:#444;font-weight:400;letter-spacing:0px;transform:scaleX(0.96);transform-origin:0 0;">10</div>
<div class="a" style="left:273.2px;top:240px;width:723.2px;height:24px;background:#f5f5f5;"></div>
<div class="a t" style="left:280.30px;top:247.50px;font-size:8.5px;color:#2c8db0;font-weight:400;letter-spacing:0px;transform:scaleX(0.945);transform-origin:0 0;text-decoration:underline;text-underline-offset:1px">NBTEMTELT0018</div>
<div class="a t" style="left:461.30px;top:247.50px;font-size:8.5px;color:#505050;font-weight:400;letter-spacing:0px;transform:scaleX(0.91);transform-origin:0 0;">AUTOMATOS</div>
<div class="a t" style="left:569.80px;top:247.50px;font-size:8.5px;color:#505050;font-weight:400;letter-spacing:0px;transform:scaleX(0.915);transform-origin:0 0;">Lenovo</div>
<div class="a t" style="left:678.60px;top:247.50px;font-size:8.5px;color:#505050;font-weight:400;letter-spacing:0px;transform:scaleX(0.924);transform-origin:0 0;">WINDOWS 10 PROFESSION...</div>
<div class="a" style="left:805px;top:248.6px;width:7px;height:7px;border-radius:50%;background:#12b5a6"></div>
<div class="a t" style="left:814.60px;top:247.50px;font-size:8.5px;color:#505050;font-weight:400;letter-spacing:0px;transform:scaleX(1.02);transform-origin:0 0;">01/28/2022</div>
<div class="a" style="left:380.8px;top:244px;width:1.2px;height:16px;background:#c4c4c4;"></div>
<div class="a" style="left:453.0px;top:244px;width:1.2px;height:16px;background:#c4c4c4;"></div>
<div class="a" style="left:561.5px;top:244px;width:1.2px;height:16px;background:#c4c4c4;"></div>
<div class="a" style="left:670.5px;top:244px;width:1.2px;height:16px;background:#c4c4c4;"></div>
<div class="a" style="left:797.0px;top:244px;width:1.2px;height:16px;background:#c4c4c4;"></div>
<div class="a" style="left:924.1px;top:244px;width:1.2px;height:16px;background:#c4c4c4;"></div>
<svg class="a" style="left:931.2px;top:245.3px" width="12.8" height="12.8" viewBox="0 0 12.8 12.8"><circle cx="6.4" cy="6.4" r="6.4" fill="#12b5a6"/><path d="M2.8,6.3 L5.3,8.8 L10.3,3.6" fill="none" stroke="#fff" stroke-width="1.3"/></svg>
<div class="a t" style="left:947.30px;top:247.50px;font-size:8.5px;color:#444;font-weight:400;letter-spacing:0px;transform:scaleX(0.96);transform-origin:0 0;">10</div>
</div>
<div class="a" style="left:996.5px;top:124.4px;width:4.5px;height:106.5px;background:#c2c2c2;border-radius:1px"></div>
<svg class="a" style="left:491.6px;top:407.5px" width="13" height="11" viewBox="0 0 13 11"><path d="M6.3,0.8 Q6.9,0.8 7.3,1.5 L12.3,9.6 Q12.6,10.5 11.6,10.5 L1,10.5 Q0,10.5 0.3,9.6 L5.3,1.5 Q5.7,0.8 6.3,0.8Z" fill="#f26b6b"/><rect x="5.8" y="3.8" width="1.1" height="3.3" fill="#fff"/><rect x="5.8" y="8" width="1.1" height="1.1" fill="#fff"/></svg>
<div class="a t" style="left:506.90px;top:408.22px;font-size:8.6px;color:#555;font-weight:400;letter-spacing:0px;transform:scaleX(0.9842);transform-origin:0 0;">Frustrating Experience</div>
<svg class="a" style="left:605.6px;top:408.2px" width="10.6" height="10.2" viewBox="0 0 10.6 10.2"><rect width="10.6" height="10.2" rx="1.3" fill="#dfa851"/><rect x="2.4" y="4.4" width="1.1" height="3.8" fill="#fff" opacity=".9"/><rect x="4.6" y="2.4" width="1.1" height="5.8" fill="#fff" opacity=".9"/><rect x="6.7" y="6.2" width="1.1" height="2" fill="#fff" opacity=".9"/></svg>
<div class="a t" style="left:619.00px;top:408.22px;font-size:8.6px;color:#555;font-weight:400;letter-spacing:0px;transform:scaleX(0.9579);transform-origin:0 0;">Average Experience</div>
<svg class="a" style="left:706.5px;top:406.8px" width="12.5" height="12.5" viewBox="0 0 12.5 12.5"><circle cx="6.25" cy="6.25" r="6.25" fill="#12b5a6"/><path d="M2.7,6.2 L5.2,8.7 L10.1,3.5" fill="none" stroke="#fff" stroke-width="1.3"/></svg>
<div class="a t" style="left:721.60px;top:408.22px;font-size:8.6px;color:#555;font-weight:400;letter-spacing:0px;transform:scaleX(0.9547);transform-origin:0 0;">Good Experience</div>
</body></html>
